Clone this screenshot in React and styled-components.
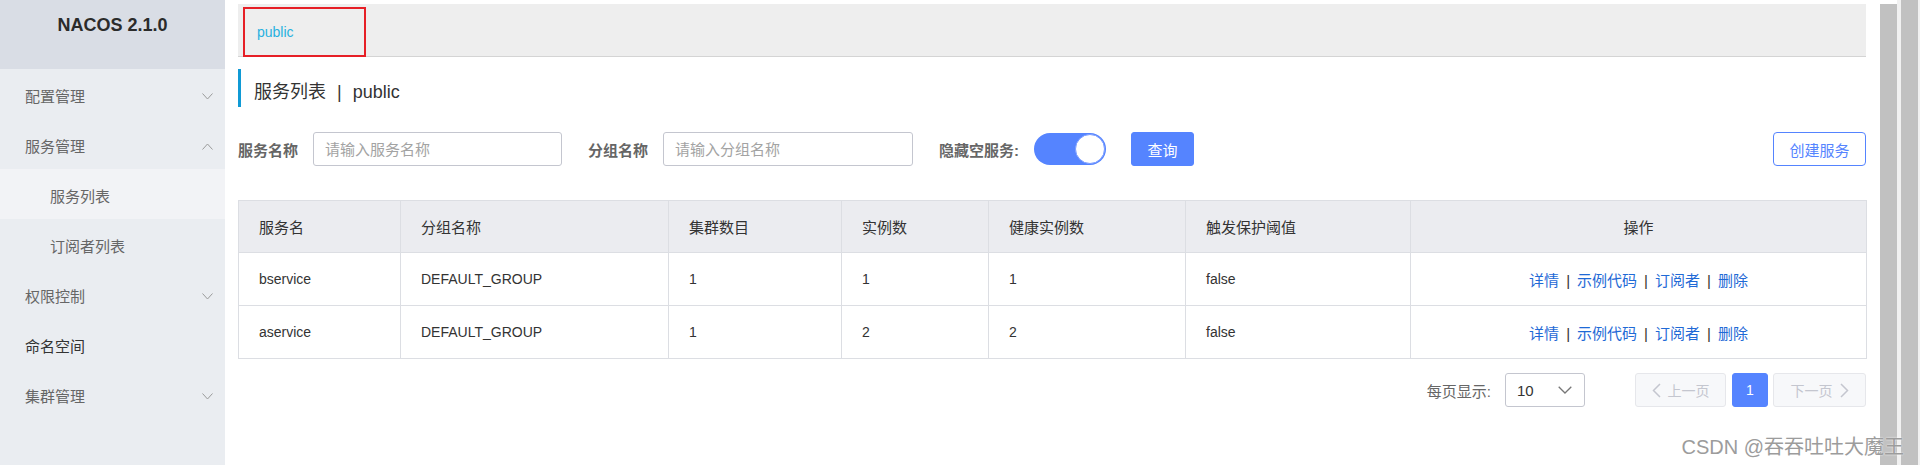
import React from 'react';
import styled, { createGlobalStyle } from 'styled-components';

const FONT = `"Liberation Sans", "Noto Sans CJK SC", Arial, sans-serif`;

const Global = createGlobalStyle`
  html, body { margin: 0; padding: 0; background: #fff; overflow: hidden; }
  body { font-family: ${FONT}; }
  * { box-sizing: border-box; }
`;

const Page = styled.div`
  position: relative;
  display: flex;
  width: 1920px;
  height: 465px;
  overflow: hidden;
  background: #fff;
  font-family: ${FONT};
`;

const Sidebar = styled.aside`
  width: 225px;
  flex: none;
  background: #eaedf1;
  display: flex;
  flex-direction: column;
`;

const Brand = styled.div`
  height: 69px;
  flex: none;
  background: #d9dde5;
  display: flex;
  justify-content: center;
  padding-top: 14px;
  font-weight: bold;
  font-size: 18px;
  line-height: 22px;
  color: #2b2b2b;
`;

const MenuItem = styled.div`
  height: 50px;
  flex: none;
  display: flex;
  align-items: center;
  justify-content: space-between;
  padding-top: 5px;
  padding-left: ${(p) => (p.$sub ? '50px' : '25px')};
  padding-right: 12px;
  background: ${(p) => (p.$active ? '#f2f3f6' : 'transparent')};
  color: ${(p) => (p.$strong ? '#333' : '#666')};
  font-size: 15px;
  line-height: 20px;
`;

const Main = styled.main`
  flex: 1;
  display: flex;
  padding: 4px 0 0 13px;
`;

const Content = styled.div`
  width: 1628px;
  flex: none;
  display: flex;
  flex-direction: column;
  margin-right: 14px;
`;

const InnerScroll = styled.div`
  width: 17px;
  flex: none;
  background: #c1c1c1;
`;

const OuterScroll = styled.div`
  width: 23px;
  flex: none;
  background: #f1f1f1;
  padding: 0 2px 0 4px;
  display: flex;
`;

const Thumb = styled.div`
  flex: 1;
  background: #c1c1c1;
`;

const TabBar = styled.div`
  height: 53px;
  flex: none;
  background: #eeeeee;
  border-bottom: 1px solid #d4d4d4;
  padding: 3px 0 0 5px;
  display: flex;
  align-items: flex-start;
`;

const Tab = styled.div`
  width: 123px;
  height: 50px;
  border: 2px solid #e61f26;
  padding-left: 12px;
  display: flex;
  align-items: center;
  font-size: 14px;
  color: #28b1e0;
`;

const Heading = styled.div`
  margin-top: 12px;
  height: 38px;
  flex: none;
  border-left: 3px solid #109ad5;
  padding: 9px 0 0 13px;
  font-size: 18px;
  line-height: 29px;
  color: #333;
  display: flex;
`;

const HeadSep = styled.span`
  margin: 0 11px;
`;

const FilterRow = styled.div`
  margin-top: 25px;
  height: 34px;
  flex: none;
  display: flex;
  align-items: center;
`;

const Label = styled.span`
  font-size: 15px;
  font-weight: bold;
  color: #666;
  margin-right: 15px;
  margin-left: ${(p) => p.$gap || 0}px;
`;

const Input = styled.input`
  width: ${(p) => p.$w}px;
  height: 34px;
  border: 1px solid #c4c6cf;
  border-radius: 3px;
  padding: 0 11px;
  font-family: ${FONT};
  font-size: 15px;
  color: #333;
  outline: none;
  &::placeholder { color: #a3a3a3; }
`;

const Switch = styled.div`
  width: 72px;
  height: 32px;
  border-radius: 16px;
  background: #5584ff;
  display: flex;
  justify-content: flex-end;
  align-items: center;
  padding: 0 1px;
  margin-right: 25px;
`;

const Knob = styled.div`
  width: 30px;
  height: 30px;
  border-radius: 50%;
  background: #fff;
  border: 1px solid #7a9dff;
`;

const Button = styled.button`
  height: 34px;
  width: ${(p) => p.$w}px;
  border-radius: ${(p) => (p.$ghost ? 4 : 3)}px;
  border: 1px solid #5584ff;
  background: ${(p) => (p.$ghost ? '#fff' : '#5584ff')};
  color: ${(p) => (p.$ghost ? '#5584ff' : '#fff')};
  font-family: ${FONT};
  font-size: 15px;
  padding: 0;
  margin-left: ${(p) => (p.$ghost ? 'auto' : '0')};
  cursor: pointer;
`;

const Table = styled.table`
  margin-top: 34px;
  width: 1628px;
  table-layout: fixed;
  border-collapse: collapse;
  border: 1px solid #dcdee3;
`;

const Col = styled.col`
  width: ${(p) => p.$w}px;
`;

const Th = styled.th`
  height: 52px;
  padding: 0 20px;
  background: #ebecf0;
  border: 1px solid #dcdee3;
  font-weight: normal;
  font-size: 15px;
  color: #333;
  text-align: ${(p) => (p.$center ? 'center' : 'left')};
`;

const Td = styled.td`
  height: 53px;
  padding: 0 20px;
  border: 1px solid #dcdee3;
  font-size: ${(p) => (p.$cjk ? 15 : 14)}px;
  color: #333;
  text-align: ${(p) => (p.$center ? 'center' : 'left')};
`;

const ActionLink = styled.a`
  color: #1f6ad6;
  text-decoration: none;
  cursor: pointer;
`;

const ActionSep = styled.span`
  margin: 0 7px;
  color: #333;
`;

const Pager = styled.div`
  margin-top: 14px;
  height: 34px;
  flex: none;
  display: flex;
  align-items: center;
  justify-content: flex-end;
`;

const PagerLabel = styled.span`
  font-size: 15px;
  color: #666;
  margin-right: 14px;
`;

const Select = styled.div`
  width: 80px;
  height: 34px;
  border: 1px solid #c4c6cf;
  border-radius: 3px;
  padding: 0 12px 0 11px;
  display: flex;
  align-items: center;
  justify-content: space-between;
  font-size: 15px;
  color: #333;
  margin-right: 50px;
`;

const PageBtn = styled.div`
  height: 34px;
  width: ${(p) => p.$w}px;
  border-radius: 3px;
  border: 1px solid ${(p) => (p.$current ? '#5584ff' : '#e6e7eb')};
  background: ${(p) => (p.$current ? '#5584ff' : '#f7f8fa')};
  color: ${(p) => (p.$current ? '#fff' : '#c4c6cf')};
  display: flex;
  align-items: center;
  justify-content: center;
  gap: 7px;
  font-size: 14px;
  margin-left: ${(p) => p.$ml || 0}px;
`;

const Watermark = styled.div`
  position: absolute;
  right: 16px;
  top: 434px;
  font-size: 20px;
  line-height: 26px;
  color: #9c9c9c;
  text-shadow: 0 0 2px #fff;
  white-space: nowrap;
`;

const Chevron = ({ up }) => (
  <svg width="11" height="7" viewBox="0 0 11 7">
    <polyline
      points={up ? '0.5,6.5 5.5,1 10.5,6.5' : '0.5,0.5 5.5,6 10.5,0.5'}
      fill="none"
      stroke="#9a9a9a"
      strokeWidth="1"
    />
  </svg>
);

const SmallArrow = ({ dir }) => (
  <svg width="9" height="15" viewBox="0 0 9 15">
    <polyline
      points={dir === 'left' ? '8,1 1.5,7.5 8,14' : '1,1 7.5,7.5 1,14'}
      fill="none"
      stroke="#c4c6cf"
      strokeWidth="1.5"
    />
  </svg>
);

const SelectArrow = () => (
  <svg width="14" height="8" viewBox="0 0 14 8">
    <polyline points="0.7,0.7 7,7 13.3,0.7" fill="none" stroke="#777" strokeWidth="1.3" />
  </svg>
);

const rows = [
  { name: 'bservice', group: 'DEFAULT_GROUP', clusters: 1, inst: 1, healthy: 1, thr: 'false' },
  { name: 'aservice', group: 'DEFAULT_GROUP', clusters: 1, inst: 2, healthy: 2, thr: 'false' },
];

const cols = [162, 268, 173, 147, 197, 225, 456];

export default function App() {
  return (
    <Page>
      <Global />
      <Sidebar>
        <Brand>NACOS 2.1.0</Brand>
        <MenuItem>配置管理<Chevron /></MenuItem>
        <MenuItem>服务管理<Chevron up /></MenuItem>
        <MenuItem $sub $active>服务列表</MenuItem>
        <MenuItem $sub>订阅者列表</MenuItem>
        <MenuItem>权限控制<Chevron /></MenuItem>
        <MenuItem $strong>命名空间</MenuItem>
        <MenuItem>集群管理<Chevron /></MenuItem>
      </Sidebar>
      <Main>
        <Content>
          <TabBar>
            <Tab>public</Tab>
          </TabBar>
          <Heading>
            <span>服务列表</span>
            <HeadSep>|</HeadSep>
            <span>public</span>
          </Heading>
          <FilterRow>
            <Label>服务名称</Label>
            <Input $w={249} placeholder="请输入服务名称" />
            <Label $gap={26}>分组名称</Label>
            <Input $w={250} placeholder="请输入分组名称" />
            <Label $gap={26}>隐藏空服务:</Label>
            <Switch><Knob /></Switch>
            <Button $w={63}>查询</Button>
            <Button $w={93} $ghost>创建服务</Button>
          </FilterRow>
          <Table>
            <colgroup>
              {cols.map((w, i) => <Col key={i} $w={w} />)}
            </colgroup>
            <thead>
              <tr>
                <Th>服务名</Th>
                <Th>分组名称</Th>
                <Th>集群数目</Th>
                <Th>实例数</Th>
                <Th>健康实例数</Th>
                <Th>触发保护阈值</Th>
                <Th $center>操作</Th>
              </tr>
            </thead>
            <tbody>
              {rows.map((r) => (
                <tr key={r.name}>
                  <Td>{r.name}</Td>
                  <Td>{r.group}</Td>
                  <Td>{r.clusters}</Td>
                  <Td>{r.inst}</Td>
                  <Td>{r.healthy}</Td>
                  <Td>{r.thr}</Td>
                  <Td $center $cjk>
                    <ActionLink>详情</ActionLink>
                    <ActionSep>|</ActionSep>
                    <ActionLink>示例代码</ActionLink>
                    <ActionSep>|</ActionSep>
                    <ActionLink>订阅者</ActionLink>
                    <ActionSep>|</ActionSep>
                    <ActionLink>删除</ActionLink>
                  </Td>
                </tr>
              ))}
            </tbody>
          </Table>
          <Pager>
            <PagerLabel>每页显示:</PagerLabel>
            <Select>
              <span>10</span>
              <SelectArrow />
            </Select>
            <PageBtn $w={91}><SmallArrow dir="left" />上一页</PageBtn>
            <PageBtn $w={36} $current $ml={6}>1</PageBtn>
            <PageBtn $w={93} $ml={5}>下一页<SmallArrow dir="right" /></PageBtn>
          </Pager>
        </Content>
        <InnerScroll />
      </Main>
      <OuterScroll><Thumb /></OuterScroll>
      <Watermark>CSDN @吞吞吐吐大魔王</Watermark>
    </Page>
  );
}
